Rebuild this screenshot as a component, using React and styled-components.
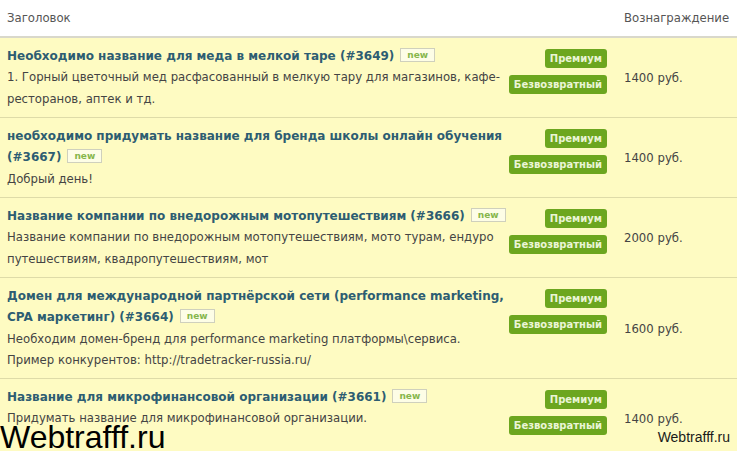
import React from "react";
import styled, { createGlobalStyle } from "styled-components";

const Global = createGlobalStyle`
  html, body { margin: 0; padding: 0; background: #ffffff; overflow: hidden; }
  body { font-family: "DejaVu Sans", Verdana, sans-serif; }
  *, *::before, *::after { box-sizing: border-box; }
`;

const Page = styled.div`
  position: relative;
  width: 737px;
  height: 451px;
  overflow: hidden;
  background: #ffffff;
`;

const HeaderRow = styled.div`
  display: grid;
  grid-template-columns: 500px 100px 1fr;
  align-items: center;
  height: 38px;
  padding-left: 7px;
  border-bottom: 2px solid #d9d8cb;
  font-size: 11.7px;
  color: #555;
`;

const HeadCell = styled.div`
  grid-column: ${(p) => p.$col};
  padding-left: ${(p) => (p.$col === 3 ? "17px" : "0")};
`;

const Row = styled.div`
  display: grid;
  grid-template-columns: 500px 100px 1fr;
  min-height: 80px;
  padding: 8px 0 7px 7px;
  background: #fefbc2;
  border-bottom: 1px solid #dedba8;
`;

const Info = styled.div`
  font-size: 11.7px;
  line-height: 21.3px;
`;

const TitleLine = styled.div``;

const Title = styled.a`
  font-weight: bold;
  font-size: 12px;
  color: #2d5d72;
  text-decoration: none;
`;

const NewTag = styled.span`
  display: inline-block;
  margin-left: 6px;
  padding: 0 6px;
  height: 14px;
  line-height: 12px;
  font-size: 9px;
  font-weight: bold;
  color: #86b64b;
  background: #fdfde6;
  border: 1px solid #cfd0bd;
  vertical-align: 2px;
`;

const Desc = styled.div`
  color: #444;
`;

const Badges = styled.div`
  display: flex;
  flex-direction: column;
  align-items: flex-end;
  gap: 7px;
  padding-top: 3px;
`;

const Badge = styled.span`
  display: inline-block;
  height: 19px;
  line-height: 19px;
  padding: 0 5px;
  border-radius: 3px;
  background: #6ca61f;
  color: #eaf5d6;
  font-size: 10px;
  font-weight: bold;
  white-space: nowrap;
`;

const Price = styled.div`
  align-self: center;
  padding-left: 17px;
  font-size: 11.7px;
  color: #444;
`;

const MarkLarge = styled.div`
  position: absolute;
  left: 0;
  bottom: -2px;
  line-height: 32px;
  font-family: "Liberation Sans", Arial, sans-serif;
  font-size: 32px;
  color: #000;
`;

const MarkSmall = styled.div`
  position: absolute;
  right: 7px;
  bottom: 6px;
  font-family: "Liberation Sans", Arial, sans-serif;
  font-size: 14px;
  color: #1a1a1a;
`;

const tasks = [
  {
    title: "Необходимо название для меда в мелкой таре (#3649)",
    desc: ["1. Горный цветочный мед расфасованный в мелкую тару для магазинов, кафе-ресторанов, аптек и тд."],
    price: "1400 руб.",
  },
  {
    title: "необходимо придумать название для бренда школы онлайн обучения (#3667)",
    desc: ["Добрый день!"],
    price: "1400 руб.",
  },
  {
    title: "Название компании по внедорожным мотопутешествиям (#3666)",
    desc: ["Название компании по внедорожным мотопутешествиям, мото турам, ендуро путешествиям, квадропутешествиям, мот"],
    price: "2000 руб.",
  },
  {
    title: "Домен для международной партнёрской сети (performance marketing, CPA маркетинг) (#3664)",
    desc: [
      "Необходим домен-бренд для performance marketing платформы\\сервиса.",
      "Пример конкурентов: http://tradetracker-russia.ru/",
    ],
    price: "1600 руб.",
  },
  {
    title: "Название для микрофинансовой организации (#3661)",
    desc: ["Придумать название для микрофинансовой организации."],
    price: "1400 руб.",
  },
];

export default function App() {
  return (
    <Page>
      <Global />
      <HeaderRow>
        <HeadCell $col={1}>Заголовок</HeadCell>
        <HeadCell $col={3}>Вознаграждение</HeadCell>
      </HeaderRow>
      {tasks.map((t) => (
        <Row key={t.title}>
          <Info>
            <TitleLine>
              <Title href="#">{t.title}</Title>
              <NewTag>new</NewTag>
            </TitleLine>
            {t.desc.map((d) => (
              <Desc key={d}>{d}</Desc>
            ))}
          </Info>
          <Badges>
            <Badge>Премиум</Badge>
            <Badge>Безвозвратный</Badge>
          </Badges>
          <Price>{t.price}</Price>
        </Row>
      ))}
      <MarkLarge>Webtrafff.ru</MarkLarge>
      <MarkSmall>Webtrafff.ru</MarkSmall>
    </Page>
  );
}
